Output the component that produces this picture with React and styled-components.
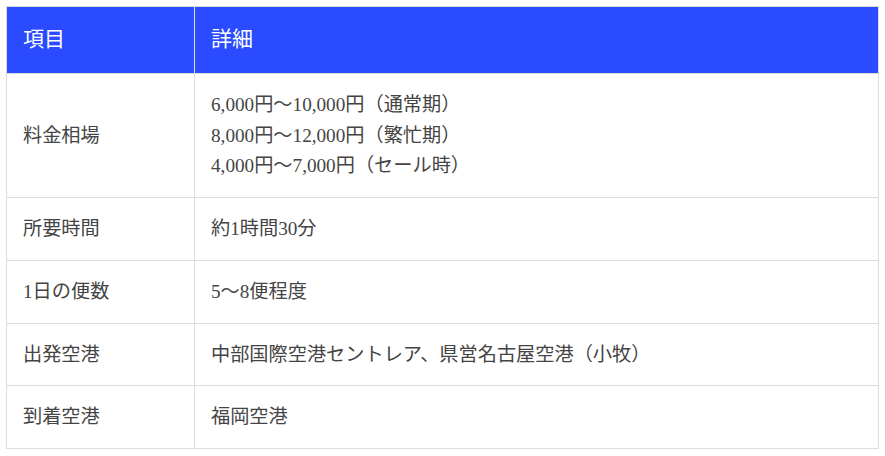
import React from "react";
import styled, { createGlobalStyle } from "styled-components";

const GlobalStyle = createGlobalStyle`
  body {
    margin: 0;
    padding: 6px;
    background: #fff;
    font-family: "Liberation Serif", "Noto Sans CJK JP", serif;
  }
`;

const rows = [
    {label: "料金相場", lines: ["6,000円～10,000円（通常期）", "8,000円～12,000円（繁忙期）", "4,000円～7,000円（セール時）"]},
    {label: "所要時間", lines: ["約1時間30分"]},
    {label: "1日の便数", lines: ["5～8便程度"]},
    {label: "出発空港", lines: ["中部国際空港セントレア、県営名古屋空港（小牧）"]},
    {label: "到着空港", lines: ["福岡空港"]},
];

export default function App() {
    return (
        <>
            <GlobalStyle/>
            <Table>
                <thead>
                <tr>
                    <HeadCell $first>項目</HeadCell>
                    <HeadCell>詳細</HeadCell>
                </tr>
                </thead>
                <tbody>
                {rows.map(row => (
                    <tr key={row.label}>
                        <Cell $first>{row.label}</Cell>
                        <Cell>
                            {row.lines.map(line => (
                                <Line key={line}>{line}</Line>
                            ))}
                        </Cell>
                    </tr>
                ))}
                </tbody>
            </Table>
        </>
    );
}

const Table = styled.table`
  width: 873px;
  border-collapse: collapse;
  font-size: 19.2px;
  line-height: 1.6;
  color: #444;
`

const HeadCell = styled.th`
  background-color: #2a4bff;
  color: #fff;
  font-size: 21px;
  font-weight: 400;
  line-height: 33px;
  text-align: left;
  padding: 16px 16px 17px;
  border: 1px solid #ddd;
  width: ${props => props.$first ? "155px" : "auto"};
`

const Cell = styled.td`
  border: 1px solid #ddd;
  padding: 16px 16px 15px;
  vertical-align: middle;
  width: ${props => props.$first ? "155px" : "auto"};
`

const Line = styled.div``
